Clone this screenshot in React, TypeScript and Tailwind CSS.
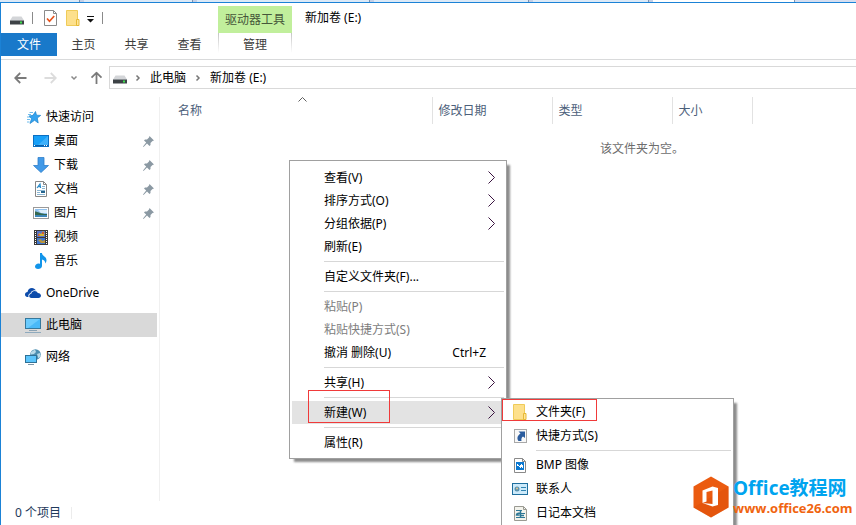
import React, { useState } from "react";

type IconProps = { className?: string };

// -----------------------------------------------------
// Icons
// -----------------------------------------------------
const DriveIcon = ({ className }: IconProps) => (
  <svg className={className} width="14" height="9" viewBox="0 0 14 9" aria-hidden="true">
    <path d="M2.5 0.5h9l2.5 4H0z" fill="#d3d5d8" />
    <path d="M0 4h14v4.5H0z" fill="#3d4246" />
    <path d="M0 4h14v1H0z" fill="#8d9296" />
    <rect x="10" y="5.5" width="2" height="2" fill="#3fe04e" />
  </svg>
);

const CheckDocIcon = () => (
  <svg width="13" height="16" viewBox="0 0 13 16" aria-hidden="true">
    <path d="M0.5 0.5h9l3 3v12h-12z" fill="#fff" stroke="#8a8a8a" />
    <path d="M9.5 0.5v3h3" fill="none" stroke="#8a8a8a" />
    <path d="M3 8.5l2.5 2.8L10.2 6" fill="none" stroke="#e8541c" strokeWidth="1.7" />
  </svg>
);

const FolderIcon = () => (
  <svg width="14" height="16" viewBox="0 0 14 16" aria-hidden="true">
    <path d="M0.5 0.5h11v15h-11z" fill="#fde08c" stroke="#efcb58" />
    <path d="M10.5 9.5H13v6h-2.500z" fill="#ffe699" stroke="#e6b935" />
  </svg>
);

const DropIcon = () => (
  <svg width="8" height="8" viewBox="0 0 8 8" aria-hidden="true">
    <path d="M0 0h7v1H0zM0 3h7L3.5 6.5z" fill="#111" />
  </svg>
);

const ArrowIcon = ({ className }: IconProps) => (
  <svg className={className} width="13" height="12" viewBox="0 0 13 12" aria-hidden="true">
    <path d="M12.5 6h-11M6.200 1l-5 5 5 5" fill="none" stroke="currentColor" strokeWidth="1.8" />
  </svg>
);

const ChevronIcon = ({ className }: IconProps) => (
  <svg className={className} width="8" height="8" viewBox="0 0 8 8" aria-hidden="true">
    <path d="M2.5 1.5L5 4 2.5 6.5" fill="none" stroke="currentColor" strokeWidth="1.5" />
  </svg>
);

const StarIcon = () => (
  <svg width="14" height="13" viewBox="0 0 14 13" aria-hidden="true">
    <path
      d="M8.5 0.5l1 3.700 4.200.2-3.400 2.600.9 5L7.600 9.300 3 12.500l1.500-4.800L2 5l4-.7z"
      fill="#33a3f0"
      stroke="#1a82cc"
      strokeWidth="0.7"
    />
    <path d="M2.5 1.5H6M1 3.5h3M0 6h3M0 8.500h3M0 11h2.500" stroke="#5fb4ea" strokeWidth="0.9" />
  </svg>
);

const DesktopIcon = () => (
  <svg width="16" height="12" viewBox="0 0 16 12" aria-hidden="true">
    <rect x="0.5" y="0.5" width="15" height="11" fill="#17a0f8" stroke="#0b6fc2" />
    <path d="M5 10l10-9v9z" fill="#3fb1fb" />
    <path d="M1 10.500h14" stroke="#0b5fa8" />
    <path d="M1 10.500h1M11 10.500h1M13 10.500h1" stroke="#fff" />
  </svg>
);

const DownloadIcon = () => (
  <svg width="16" height="16" viewBox="0 0 16 16" aria-hidden="true">
    <path d="M5 0.500h6V8.500h4.500L8 15.500 0.500 8.500H5z" fill="#429ae8" stroke="#2f7fca" strokeWidth="0.8" />
  </svg>
);

const DocumentIcon = () => (
  <svg width="12" height="16" viewBox="0 0 12 16" aria-hidden="true">
    <path d="M0.5 0.5h8l3 3v12h-11z" fill="#fff" stroke="#868686" />
    <path d="M8.5 0.5v3h3" fill="none" stroke="#868686" />
    <path d="M2 7l3-4 .6 4M3.200 5.700h2" fill="none" stroke="#2a8bc9" strokeWidth="1.200" />
    <path d="M7 5.500h3M7 7.500h3M2 9.500h8M2 11.500h3M2 13.500h8" stroke="#8bb6d2" />
    <path d="M6 11h4" stroke="#24658f" strokeWidth="2" />
  </svg>
);

const PictureIcon = () => (
  <svg width="16" height="12" viewBox="0 0 16 12" aria-hidden="true">
    <rect x="0.5" y="0.5" width="15" height="11" fill="#fff" stroke="#9a9a9a" />
    <rect x="2" y="2" width="12" height="8" fill="#8fc1ef" />
    <path d="M5 3h9v3H8z" fill="#dceefb" />
    <path d="M2 4.500c3 0 5 2.500 12 2.500v1H2z" fill="#35684f" />
    <path d="M2 8h12v2H2z" fill="#3d86b8" />
  </svg>
);

const VideoIcon = () => (
  <svg width="14" height="15" viewBox="0 0 14 15" aria-hidden="true">
    <rect width="14" height="15" fill="#3a3a3a" />
    <rect x="3" y="1" width="8" height="6" fill="#5a72c4" />
    <rect x="3" y="8" width="8" height="6" fill="#3f77cf" />
    <path d="M4 6l1-3 2 1 2-3 1.500 2-.5 3z" fill="#d7b534" />
    <path d="M8 2h2v2H8zM4 4h1.500v2H4z" fill="#cf5a35" />
    <path d="M4 10l3-1 1 2 3-1v3H7z" fill="#b9953d" />
    <path d="M1.500 1v13M12.500 1v13" stroke="#fff" strokeWidth="1" strokeDasharray="1 1" />
  </svg>
);

const MusicIcon = () => (
  <svg width="12" height="16" viewBox="0 0 12 16" aria-hidden="true">
    <path
      d="M5 0h2c0 3 4.500 3.500 4.500 7 0 1.500-.5 2.500-1.500 3.500.5-2.500-1-3.500-3-4v6.500C7 15 5 16 3 16s-3-1-3-2.500C0 12 1.500 10.500 3.500 10.500c.5 0 1 0 1.500.500z"
      fill="#1295ea"
    />
  </svg>
);

const OneDriveIcon = () => (
  <svg width="16" height="10" viewBox="0 0 16 10" aria-hidden="true">
    <path
      d="M2 9C.5 8.500 0 7.500 0 6.500 0 5 1 4 2.500 4 3 1.500 4.500 0 7 0c1.500 0 3 1 4 2.500C8.500 2 6.500 3 5.500 5.200 3.500 5.500 3 7.500 3.500 9z"
      fill="#0d4cab"
    />
    <path
      d="M6.500 10C5 10 4.200 9 4.200 8s.8-2 2.100-2.200C6.500 4 8 3 9.600 3c1.500 0 2.700.8 3.200 2C14.500 5 16 6.200 16 7.800 16 9 15 10 13.500 10z"
      fill="#0d4cab"
    />
  </svg>
);

const ComputerIcon = () => (
  <svg width="16" height="15" viewBox="0 0 16 15" aria-hidden="true">
    <rect x="0.5" y="0.5" width="15" height="10" fill="#6bcbfd" stroke="#35789c" />
    <path d="M3 10l12-9v9z" fill="#49b9f8" />
    <path d="M4 12.500h8" stroke="#8ba3b5" />
    <path d="M0 14.500h16" stroke="#8faabd" />
  </svg>
);

const NetworkIcon = () => (
  <svg width="16" height="16" viewBox="0 0 16 16" aria-hidden="true">
    <circle cx="10.500" cy="5.500" r="5.300" fill="#4d8fb1" />
    <path d="M6 3l4-2.500 1 2.500-2 2-3 .5zM12 5l3-1 .5 3-2 2.500z" fill="#b9dae8" />
    <rect x="0.5" y="6.500" width="11" height="7" fill="#5cc5fc" stroke="#2f7196" />
    <path d="M3 15.500h6" stroke="#7c96a8" />
  </svg>
);

const PinIcon = () => (
  <svg width="11" height="11" viewBox="0 0 11 11" aria-hidden="true">
    <path
      d="M6.500 0L11 4.500l-1.500.5-2 2v2l-1 1L4 7.500.5 11 0 10.500 3.200 6.500 1 4.500l1-1h2l2-2z"
      fill="#8b99a3"
    />
  </svg>
);

const ShortcutIcon = () => (
  <svg width="13" height="14" viewBox="0 0 13 14" aria-hidden="true">
    <rect x="0.5" y="0.5" width="12" height="13" fill="#f8f8f8" stroke="#a8a8a8" />
    <path d="M4.500 2.500h6.500v6.500L9 7.500C7.500 8.500 7 10 7.500 12h-3C2.500 9.500 3.500 6.500 6.500 4.500z" fill="#2b5c9e" />
  </svg>
);

const BmpIcon = () => (
  <svg width="12" height="15" viewBox="0 0 12 15" aria-hidden="true">
    <path d="M0.5 0.5h8l3 3v11h-11z" fill="#fff" stroke="#8a8a8a" />
    <path d="M8.5 0.5v3h3" fill="none" stroke="#8a8a8a" />
    <rect x="2" y="4" width="8" height="8" fill="#0a78d1" />
    <path d="M3 6h1v1h1v1h1V7h1V6h1v1h1v3H8V9H7v1H6V9H5V8H3z" fill="#fff" />
  </svg>
);

const ContactIcon = () => (
  <svg width="16" height="12" viewBox="0 0 16 12" aria-hidden="true">
    <rect x="0.5" y="0.5" width="15" height="11" fill="#cdeafa" stroke="#1f6f9e" />
    <circle cx="5" cy="6" r="2.500" fill="#5b93ae" />
    <circle cx="5" cy="5.500" r="1" fill="#e5c695" />
    <path d="M9 4.500h5M9 7.500h5" stroke="#3284b0" />
  </svg>
);

const JournalIcon = () => (
  <svg width="13" height="15" viewBox="0 0 13 15" aria-hidden="true">
    <path d="M0.5 0.5h9l3 3v11h-12z" fill="#f3f3ec" stroke="#9a9a92" />
    <path d="M9.5 0.5v3h3" fill="none" stroke="#9a9a92" />
    <path d="M2 4.500h6M6 7.500h5M2 11.500h9" stroke="#2f7896" />
    <path d="M6.500 4v8M6.500 7c-2.500 0-4 .5-4 2h3M7 9.500h3" fill="none" stroke="#2f7896" strokeWidth="1.500" />
  </svg>
);

const OfficeLogo = () => (
  <svg width="36" height="42" viewBox="0 0 36 42" aria-hidden="true">
    <path d="M18 0.500l17.500 10v21L18 41.500.5 31.500v-21z" fill="#eb5b10" />
    <path d="M0.500 31.500l35-21v21L18 41.500z" fill="#dd4f09" opacity="0.500" />
    <path d="M9.500 14.500L19.500 10.500l5.500 1.500v17l-5.500 1.500-10-3.500 10 1V14.500l-6 1.500v9.500l-4 1.500z" fill="#fff" />
  </svg>
);

const MenuArrow = () => (
  <svg width="8" height="13" viewBox="0 0 8 13" aria-hidden="true">
    <path d="M0.5 0.5l6 6-6 6" fill="none" stroke="#3a1440" strokeWidth="1" />
  </svg>
);

// -----------------------------------------------------
// Data
// -----------------------------------------------------
const quickLinks = [
  { label: "桌面", icon: <DesktopIcon />, pinned: true },
  { label: "下载", icon: <DownloadIcon />, pinned: true },
  { label: "文档", icon: <DocumentIcon />, pinned: true },
  { label: "图片", icon: <PictureIcon />, pinned: true },
  { label: "视频", icon: <VideoIcon />, pinned: false },
  { label: "音乐", icon: <MusicIcon />, pinned: false },
];

const roots = [
  { label: "OneDrive", icon: <OneDriveIcon /> },
  { label: "此电脑", icon: <ComputerIcon /> },
  { label: "网络", icon: <NetworkIcon /> },
];

type MenuEntry = {
  label: string;
  arrow?: boolean;
  disabled?: boolean;
  shortcut?: string;
  active?: boolean;
};

const menuGroups: MenuEntry[][] = [
  [
    { label: "查看(V)", arrow: true },
    { label: "排序方式(O)", arrow: true },
    { label: "分组依据(P)", arrow: true },
    { label: "刷新(E)" },
  ],
  [{ label: "自定义文件夹(F)..." }],
  [
    { label: "粘贴(P)", disabled: true },
    { label: "粘贴快捷方式(S)", disabled: true },
    { label: "撤消 删除(U)", shortcut: "Ctrl+Z" },
  ],
  [{ label: "共享(H)", arrow: true }],
  [{ label: "新建(W)", arrow: true, active: true }],
  [{ label: "属性(R)" }],
];

const newGroups = [
  [
    { label: "文件夹(F)", icon: <FolderIcon /> },
    { label: "快捷方式(S)", icon: <ShortcutIcon /> },
  ],
  [
    { label: "BMP 图像", icon: <BmpIcon /> },
    { label: "联系人", icon: <ContactIcon /> },
    { label: "日记本文档", icon: <JournalIcon /> },
  ],
];

// -----------------------------------------------------
// Window parts
// -----------------------------------------------------
function BackgroundTabs() {
  return (
    <div className="flex h-[2px] shrink-0 bg-[#c3cfe6]">
      <div className="w-20 border-r border-[#7f93ad] bg-[#dbe9f7]" />
      <div className="ml-1 w-[109px] border-r border-[#7f93ad] bg-[#dbe9f7]" />
      <div className="ml-1 w-[173px] border-r border-[#7f93ad] bg-[#dbe9f7]" />
      <div className="ml-1 w-[155px] border-r border-[#7f93ad] bg-[#dbe9f7]" />
      <div className="ml-1 w-[116px] border-r border-[#7f93ad] bg-[#dbe9f7]" />
      <div className="ml-1 w-[142px] border-r border-[#7f93ad] bg-white" />
      <div className="flex-1 bg-[#d5def0]" />
    </div>
  );
}

function Ribbon() {
  return (
    <header className="shrink-0 border-b border-[#d9dadb] pb-[3px]">
      <div className="flex h-[30px]">
        <div className="flex w-[217px] items-center pl-[9px]">
          <DriveIcon className="mt-1" />
          <span className="ml-2 h-3 w-px bg-[#8a8a8a]" />
          <button aria-label="属性" className="ml-[11px]">
            <CheckDocIcon />
          </button>
          <button aria-label="新建文件夹" className="ml-[9px]">
            <FolderIcon />
          </button>
          <button aria-label="自定义快速访问工具栏" className="mt-1 ml-[7px]">
            <DropIcon />
          </button>
          <span className="ml-[7px] h-3 w-px bg-[#8a8a8a]" />
        </div>
        <div className="mt-[3px] flex w-[74px] items-center justify-center bg-[#c1ef9c] text-[#46563a]">
          驱动器工具
        </div>
        <h1 className="pl-[13px] leading-[30px]">新加卷 (E:)</h1>
      </div>
      <nav className="flex h-[23px] text-[#3c3c3c]">
        <button className="w-14 bg-[#1979ca] text-white">文件</button>
        <button className="w-[53px]">主页</button>
        <button className="w-[53px]">共享</button>
        <button className="w-[53px]">查看</button>
        <div className="ml-[2px] flex w-[74px]">
          <span className="h-5 w-px bg-linear-to-b from-[#c4c4c4] to-white" />
          <button className="flex-1">管理</button>
          <span className="h-5 w-px bg-linear-to-b from-[#c4c4c4] to-white" />
        </div>
      </nav>
    </header>
  );
}

function AddressBar() {
  return (
    <div className="flex h-[37px] shrink-0 items-center pb-[2px] pl-[13px]">
      <button aria-label="后退" className="text-[#7a7a7a]">
        <ArrowIcon />
      </button>
      <button aria-label="前进" className="ml-[17px] text-[#dcdcdc]">
        <ArrowIcon className="rotate-180" />
      </button>
      <button aria-label="最近浏览的位置" className="ml-[13px] text-[#8a8a8a]">
        <ChevronIcon className="rotate-90" />
      </button>
      <button aria-label="向上" className="ml-3 text-[#7a7a7a]">
        <ArrowIcon className="rotate-90" />
      </button>
      <div className="ml-[6px] flex h-[23px] flex-1 items-center border border-r-0 border-[#d9d9d9] pl-[3px]">
        <DriveIcon className="mt-1" />
        <ChevronIcon className="ml-[7px] text-[#777]" />
        <button className="ml-2">此电脑</button>
        <ChevronIcon className="ml-2 text-[#777]" />
        <button className="ml-2">新加卷 (E:)</button>
      </div>
    </div>
  );
}

function Sidebar() {
  const [selected, setSelected] = useState("此电脑");

  return (
    <aside className="w-[159px] shrink-0 border-r border-[#f0f0f0] pt-2">
      <a href="#quick" className="flex h-6 items-center pl-[26px]">
        <StarIcon />
        <span className="ml-[5px]">快速访问</span>
      </a>
      <ul>
        {quickLinks.map((item) => (
          <li key={item.label}>
            <a href="#folder" className="flex h-6 items-center pr-[5px] pl-8">
              <span className="flex w-4 justify-center">{item.icon}</span>
              <span className="ml-[5px] flex-1">{item.label}</span>
              {item.pinned && <PinIcon />}
            </a>
          </li>
        ))}
      </ul>
      <ul className="mt-2 flex flex-col gap-2">
        {roots.map((item) => (
          <li key={item.label} className="pr-[2px]">
            <a
              href="#root"
              onClick={() => setSelected(item.label)}
              className={`flex h-6 items-center pl-6 ${
                selected === item.label ? "bg-[#d9d9d9]" : ""
              }`}
            >
              {item.icon}
              <span className="ml-[5px]">{item.label}</span>
            </a>
          </li>
        ))}
      </ul>
    </aside>
  );
}

function FileList() {
  return (
    <main className="min-w-0 flex-1 overflow-hidden">
      <table className="table-fixed border-collapse text-left text-[#4c607a]">
        <thead>
          <tr className="h-[27px]">
            <th className="relative w-[272px] border-r border-[#e2e2e2] pl-[18px] font-normal">
              名称
              <svg
                className="absolute top-0 left-[138px]"
                width="9"
                height="5"
                viewBox="0 0 9 5"
                aria-hidden="true"
              >
                <path d="M0.5 4.500l4-4 4 4" fill="none" stroke="#5f5f5f" />
              </svg>
            </th>
            <th className="w-[120px] border-r border-[#e2e2e2] pl-[6px] font-normal">修改日期</th>
            <th className="w-[120px] border-r border-[#e2e2e2] pl-[6px] font-normal">类型</th>
            <th className="w-[80px] border-r border-[#e2e2e2] pl-[6px] font-normal">大小</th>
          </tr>
        </thead>
      </table>
      <p className="mt-4 pl-[440px] whitespace-nowrap text-[#6d6d6d]">该文件夹为空。</p>
    </main>
  );
}

function ContextMenu() {
  return (
    <div
      role="menu"
      className="absolute top-[160px] left-[288px] w-[218px] border border-[#a0a0a0] bg-white px-[2px] pt-[5px] pb-1 shadow-[4px_4px_2px_-1px_rgba(0,0,0,0.45)]"
    >
      {menuGroups.map((group, idx) => (
        <div key={idx}>
          {idx > 0 && <hr className="my-[3px] ml-8 border-[#d7d7d7]" />}
          {group.map((item) => (
            <button
              key={item.label}
              role="menuitem"
              disabled={item.disabled}
              className={`flex h-[23px] w-full items-center pr-2 pl-8 ${
                item.active ? "bg-[#e3e3e3]" : ""
              } ${item.disabled ? "text-[#7d7d7d]" : ""}`}
            >
              <span className="flex-1 text-left">{item.label}</span>
              {item.shortcut && <span className="mr-[10px]">{item.shortcut}</span>}
              {item.arrow && <MenuArrow />}
            </button>
          ))}
        </div>
      ))}
    </div>
  );
}

function NewMenu() {
  return (
    <div
      role="menu"
      className="absolute top-[398px] left-[500px] w-[233px] border border-[#a0a0a0] bg-white px-[2px] py-px shadow-[4px_4px_2px_-1px_rgba(0,0,0,0.45)]"
    >
      {newGroups.map((group, idx) => (
        <div key={idx}>
          {idx > 0 && <hr className="my-[2px] ml-8 border-[#d7d7d7]" />}
          {group.map((item) => (
            <button
              key={item.label}
              role="menuitem"
              className="flex h-6 w-full items-center pl-2"
            >
              <span className="flex w-4 justify-center">{item.icon}</span>
              <span className="ml-2">{item.label}</span>
            </button>
          ))}
        </div>
      ))}
    </div>
  );
}

function Watermark() {
  return (
    <div className="absolute top-[476px] left-[692px] flex items-center whitespace-nowrap">
      <OfficeLogo />
      <div className="ml-1 font-['Open_Sans','Noto_Sans_CJK_SC',sans-serif] font-bold">
        <div className="text-[19px] leading-[22px] text-[#00a4ef]">Office教程网</div>
        <div className="text-[13px] leading-[18px] text-[#f0640f]">www.office26.com</div>
      </div>
    </div>
  );
}

/** Explorer window */
export default function App() {
  return (
    <div className="flex h-screen flex-col overflow-hidden bg-white font-['Noto_Sans','Noto_Sans_CJK_SC',sans-serif] text-[12px] leading-[18px] text-black">
      <BackgroundTabs />
      <div className="relative flex min-h-0 flex-1 flex-col border-t border-l border-[#1b82d6]">
        <Ribbon />
        <AddressBar />
        <div className="flex min-h-0 flex-1">
          <Sidebar />
          <FileList />
        </div>
        <footer className="flex h-6 shrink-0 items-center pl-[14px] text-[#1e395b]">
          <span>0 个项目</span>
          <span className="ml-[10px] h-3 w-px bg-[#ececec]" />
        </footer>
      </div>

      {/* Menus and callouts */}
      <div className="absolute top-0 left-px">
        <ContextMenu />
        <NewMenu />
        <div className="pointer-events-none absolute top-[390px] left-[307px] h-[33px] w-[82px] border border-[#f03a3a]" />
        <div className="pointer-events-none absolute top-[399px] left-[501px] h-[22px] w-[95px] border border-[#f03a3a]" />
        <Watermark />
      </div>
    </div>
  );
}
